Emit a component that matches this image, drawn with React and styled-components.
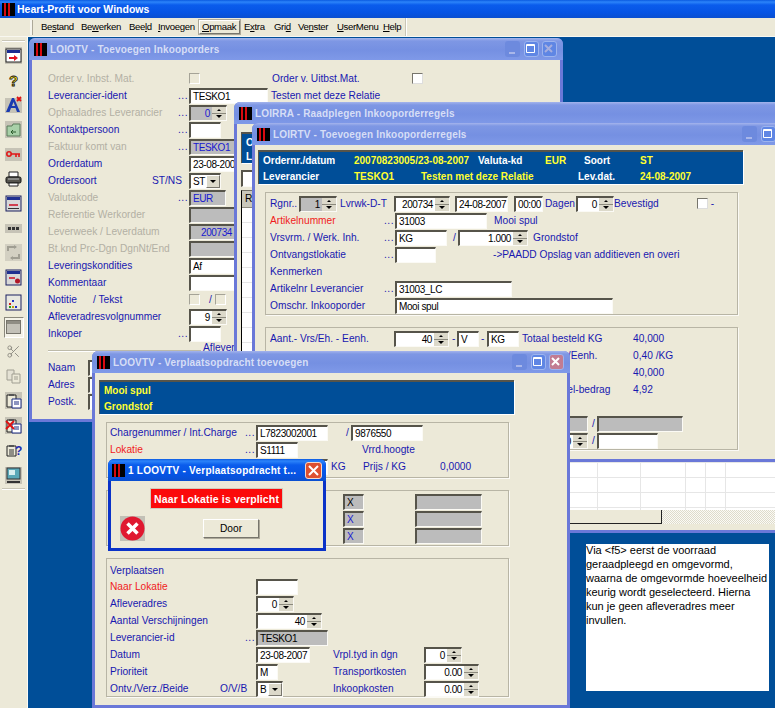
import React from 'react'
import styled, { createGlobalStyle, css } from 'styled-components'
import { Scissors } from 'lucide-react'

const GlobalStyle = createGlobalStyle`
    html, body {
        margin: 0;
        padding: 0;
        background: #004e98;
        overflow: hidden;
    }
    * {
        box-sizing: border-box;
    }
`;

function Win({ x, y, w, h, z, title, close, children }) {
    return (
        <WinFrame $x={x} $y={y} $w={w} $h={h} $z={z}>
            <TitleBar>
                <TitleLogo />
                <TitleText>{title}</TitleText>
                <WinButtons>
                    <WinButton $dim><svg width="15" height="16"><rect x="4" y="11" width="6" height="2" fill="#a9b7ea" /></svg></WinButton>
                    <WinButton><svg width="15" height="16"><path d="M2.5 3.500h8v8h-8z M2.5 4.500h8" fill="none" stroke="#fff" /></svg></WinButton>
                    <WinButton $close={close}><svg width="15" height="16"><path d="M3 4l7 7M10 4l-7 7" stroke={close ? '#fff' : '#a6aede'} strokeWidth="2" /></svg></WinButton>
                </WinButtons>
            </TitleBar>
            <WinBody>{children}</WinBody>
        </WinFrame>
    )
}

function Lead({ w = 141, tone, dots, children }) {
    return (
        <Label $w={w} $tone={tone}>
            <span>{children}</span>
            {dots && <Dots>...</Dots>}
        </Label>
    )
}

function Spin({ w, ml, gray, blue, children }) {
    return (
        <Field $w={w} $ml={ml} $gray={gray} $blue={blue} $spin>
            <SpinValue>{children}</SpinValue>
            <SpinBox>
                <SpinPart><ArrowUp /></SpinPart>
                <SpinPart><ArrowDown /></SpinPart>
            </SpinBox>
        </Field>
    )
}

function Select({ w, children }) {
    return (
        <Field $w={w} $spin>
            <SpinValue $left>{children}</SpinValue>
            <DropButton><ArrowDown /></DropButton>
        </Field>
    )
}

function Toolbar() {
    return (
        <Sidebar>
            <SideRule />
            <Tool><svg width="17" height="17"><rect width="17" height="17" fill="#c6c3b6" /><rect x="1" y="2" width="15" height="13" fill="#fff" stroke="#222" /><rect x="2" y="3" width="13" height="3" fill="#1a2a90" /><path d="M4 10h5V8l4 3-4 3v-2H4z" fill="#e01020" /></svg></Tool>
            <Tool><svg width="17" height="17"><text x="4" y="14" fontFamily="Liberation Sans" fontSize="15" fontWeight="700" fill="#ffe020" stroke="#111" strokeWidth=".8">?</text></svg></Tool>
            <Tool><svg width="17" height="17"><rect y="2" width="17" height="15" fill="#c6c3b6" /><path d="M1 16L7 2h2l6 14h-3l-1.500-4H6l-1.500 4zM7 10h3L8.500 6z" fill="#1a3ab0" /><path d="M12 1l4 4M16 1l-4 4" stroke="#e01010" strokeWidth="1.800" /></svg></Tool>
            <Tool><svg width="17" height="17"><rect width="17" height="17" fill="#c6c3b6" /><path d="M2 5h5l1-2h7v12H2z" fill="#a8d0a8" stroke="#5a7a5a" /><path d="M6 11h5M8 9l-2 2 2 2" stroke="#2a5a2a" fill="none" /></svg></Tool>
            <Tool><svg width="17" height="17"><rect y="2" width="17" height="13" fill="#c6c3b6" /><circle cx="4" cy="8" r="2.200" fill="none" stroke="#e01818" strokeWidth="1.600" /><path d="M6 8h9M11 8v3M14 8v3" stroke="#e01818" strokeWidth="1.600" /></svg></Tool>
            <Tool><svg width="17" height="17"><path d="M4 2h9v5H4z" fill="#fff" stroke="#222" /><rect x="1" y="7" width="15" height="6" rx="1.500" fill="#55544e" stroke="#111" /><path d="M3 9h11" stroke="#bbb" /><path d="M4 13h9v3H4z" fill="#fff" stroke="#222" /></svg></Tool>
            <Tool><svg width="17" height="17"><rect x="1" y="1" width="15" height="15" fill="#d8d8d8" stroke="#1a2060" /><rect x="2" y="2" width="13" height="3" fill="#203090" /><rect x="4" y="9" width="9" height="2" fill="#d04050" /><rect x="3" y="13" width="11" height="1" fill="#333" /></svg></Tool>
            <Tool><svg width="17" height="17"><rect y="4" width="17" height="9" fill="#c6c3b6" /><path d="M3 7h3v3H3zM7 7h3v3H7zM11 7h3v3h-3z" fill="#333" /></svg></Tool>
            <Tool><svg width="17" height="17"><rect width="17" height="17" fill="#d3d0c2" /><path d="M3 7V3h8M14 10v4H6" fill="none" stroke="#a09e92" strokeWidth="2" /><path d="M9 1l3 2-3 2zM8 12l-3 2 3 2z" fill="#a09e92" /></svg></Tool>
            <Tool><svg width="17" height="17"><rect x="1" y="1" width="15" height="15" fill="#d8d8d8" stroke="#1a2060" /><rect x="2" y="2" width="13" height="3" fill="#203090" /><path d="M4 9h6" stroke="#d04050" strokeWidth="2" /><circle cx="12.500" cy="12" r="2.500" fill="#b01828" /></svg></Tool>
            <Tool><svg width="17" height="17"><rect x="1" y="1" width="15" height="15" fill="#e8e8e0" stroke="#1a2060" /><rect x="4" y="9" width="2" height="2" fill="#d02020" /><rect x="4" y="12" width="2" height="2" fill="#20a020" /><rect x="7" y="6" width="2" height="2" fill="#2030c0" /><rect x="7" y="12" width="2" height="2" fill="#c0a010" /><rect x="10" y="12" width="2" height="2" fill="#2030c0" /></svg></Tool>
            <Tool $pressed><svg width="15" height="14"><rect x=".5" y=".5" width="14" height="13" fill="#c3c1b8" stroke="#77756c" /><rect x="1" y="1" width="13" height="3" fill="#8f8d84" /></svg></Tool>
            <Tool><Scissors size={15} color="#8e8c82" strokeWidth={1.500} /></Tool>
            <Tool><svg width="17" height="17"><path d="M2 2h7v10H2z" fill="#e4e1d4" stroke="#a09e92" /><path d="M7 6h8v9H7z" fill="#ece9d8" stroke="#a09e92" /><path d="M9 9h4M9 11h4" stroke="#a09e92" /></svg></Tool>
            <Tool><svg width="17" height="17"><rect width="17" height="17" fill="#c6c3b6" /><path d="M2 3h9v12H2z" fill="#ece9d8" stroke="#222" /><path d="M4 2h5v2H4z" fill="#555" /><path d="M7 7h9v9H7z" fill="#fff" stroke="#1a2a80" /><path d="M9 10h5M9 12h5" stroke="#1a2a80" /></svg></Tool>
            <Tool><svg width="17" height="17"><rect width="17" height="17" fill="#c6c3b6" /><path d="M2 3h9v12H2z" fill="#ece9d8" stroke="#222" /><path d="M4 2h5v2H4z" fill="#555" /><path d="M7 7h9v9H7z" fill="#fff" stroke="#1a2a80" /><path d="M9 10h5M9 12h5" stroke="#1a2a80" /><path d="M1 4l8 8M9 4l-8 8" stroke="#e01010" strokeWidth="1.800" /></svg></Tool>
            <Tool><svg width="17" height="17"><path d="M2 4h9v10H2z" fill="#ece9d8" stroke="#222" /><path d="M4 3h5v2H4z" fill="#555" /><path d="M4 8h5M4 10h5M4 12h5" stroke="#333" /><text x="10" y="13" fontFamily="Liberation Sans" fontSize="12" fontWeight="700" fill="#1a2ab0">?</text></svg></Tool>
            <Tool><svg width="17" height="17"><rect width="17" height="17" fill="#c6c3b6" /><rect x="2" y="1" width="13" height="11" fill="#5aa8b8" stroke="#333" /><rect x="4" y="3" width="6" height="5" fill="#d8eef0" /><path d="M2 15h13" stroke="#333" strokeWidth="2" /></svg></Tool>
            <SideRule $bottom />
        </Sidebar>
    )
}

const menu = [
    [40, <>Be<u>s</u>tand</>], [48, <>Be<u>w</u>erken</>], [29, <>Bee<u>l</u>d</>], [43, <><u>I</u>nvoegen</>],
    [43, <><u>O</u>pmaak</>, true], [30, <>E<u>x</u>tra</>], [24, <>Gri<u>d</u></>], [39, <>Ve<u>n</u>ster</>],
    [46, <><u>U</u>serMenu</>], [27, <><u>H</u>elp</>],
]

const gridRows = Array.from({ length: 21 })
const gridCols = [356, 43, 45, 20, 20, 60]

export default function App() {
    return (
        <Page>
            <GlobalStyle />
            <AppTitle>
                <TitleLogo />
                <AppName>Heart-Profit voor Windows</AppName>
            </AppTitle>
            <MenuBar>
                <Grip />
                {menu.map(([w, text, open], i) => <MenuItem key={i} $w={w}><MenuLabel $open={open}>{text}</MenuLabel></MenuItem>)}
                <MenuEnd />
            </MenuBar>
            <Workspace>
                <Toolbar />
                <Desktop>
                    {/* main order window */}
                    <Win x={29} y={38} w={534} h={384} z={1} title="LOIOTV - Toevoegen Inkooporders">
                        <Form>
                            <Row $h={18}><Lead tone="off">Order v. Inbst. Mat.</Lead><Check $off /><Gap $w={72} /><Lead w={140}>Order v. Uitbst.Mat.</Lead><Check /></Row>
                            <Row><Lead dots>Leverancier-ident</Lead><Field $w={79}>TESKO1</Field><Label $ml={3}>Testen met deze Relatie</Label></Row>
                            <Row><Lead tone="off" dots>Ophaaladres Leverancier</Lead><Spin w={38} gray blue>0</Spin></Row>
                            <Row><Lead dots>Kontaktpersoon</Lead><Field $w={32} /></Row>
                            <Row><Lead tone="off" dots>Faktuur komt van</Lead><Field $w={72} $gray $blue>TESKO1</Field></Row>
                            <Row><Lead>Orderdatum</Lead><Field $w={64}>23-08-2007</Field></Row>
                            <Row><Lead w={104}>Ordersoort</Lead><Lead w={37}>ST/NS</Lead><Select w={32}>ST</Select></Row>
                            <Row><Lead tone="off" dots>Valutakode</Lead><Field $w={37} $gray $blue>EUR</Field></Row>
                            <Row><Lead tone="off">Referentie Werkorder</Lead><Field $w={80} $gray /></Row>
                            <Row><Lead tone="off">Leverweek / Leverdatum</Lead><Spin w={60} gray blue>200734</Spin></Row>
                            <Row><Lead tone="off">Bt.knd Prc-Dgn DgnNt/End</Lead><Field $w={80} $gray /></Row>
                            <Row><Lead>Leveringskondities</Lead><Field $w={80}>Af</Field></Row>
                            <Row><Lead>Kommentaar</Lead><Field $w={80} /></Row>
                            <Row><Lead w={45}>Notitie</Lead><Lead w={96}>/ Tekst</Lead><Check $off /><Label $ml={9} $w={6}>/</Label><Check $off /></Row>
                            <Row><Lead>Afleveradresvolgnummer</Lead><Spin w={38}>9</Spin></Row>
                            <Row><Lead dots>Inkoper</Lead><Field $w={32} /></Row>
                            <Row><Rule><RuleText>Afleveradres</RuleText></Rule></Row>
                            <Row><Lead w={40}>Naam</Lead><Field $w={80} /></Row>
                            <Row><Lead w={40}>Adres</Lead><Field $w={80} /></Row>
                            <Row><Lead w={40}>Postk.</Lead><Field $w={80} /></Row>
                        </Form>
                    </Win>

                    {/* order lines overview, only its edges are seen */}
                    <Win x={234} y={102} w={600} h={431} z={2} title="LOIRRA - Raadplegen Inkooporderregels">
                        <BackPane>
                            <InfoBar $h={31} $w={500} $mb={7}>
                                <InfoRow><Info>Ordernr./datum</Info></InfoRow>
                                <InfoRow><Info>Leverancier</Info></InfoRow>
                            </InfoBar>
                            <Field $w={120} $h={17} />
                            <DataGrid>
                                <GridHead>Rgnr</GridHead>
                                <GridBody>
                                    {gridRows.map((_, i) => (
                                        <GridRow key={i}>{gridCols.map((w, j) => <GridCell key={j} $w={w} />)}</GridRow>
                                    ))}
                                </GridBody>
                                <ScrollBar><ScrollThumb /><ScrollTrack /></ScrollBar>
                            </DataGrid>
                        </BackPane>
                    </Win>

                    {/* order line entry */}
                    <Win x={252} y={123} w={548} h={339} z={3} title="LOIRTV - Toevoegen Inkooporderregels">
                        <Pane $left={3} $top={5}>
                            <InfoBar $h={34} $w={485}>
                                <InfoRow>
                                    <Info $w={91}>Ordernr./datum</Info><Info $w={124} $value>20070823005/23-08-2007</Info>
                                    <Info $w={67}>Valuta-kd</Info><Info $w={39} $value>EUR</Info>
                                    <Info $w={56}>Soort</Info><Info $value>ST</Info>
                                </InfoRow>
                                <InfoRow>
                                    <Info $w={91}>Leverancier</Info><Info $w={67} $value>TESKO1</Info>
                                    <Info $w={157} $value>Testen met deze Relatie</Info><Info $w={62}>Lev.dat.</Info><Info $value>24-08-2007</Info>
                                </InfoRow>
                            </InfoBar>
                        </Pane>
                        <Group $ml={10} $mt={8} $w={473} $h={123} $top={2} $left={4}>
                            <Row><Lead w={29}>Rgnr..</Lead><Spin w={38} gray>1</Spin><Gap $w={3} /><Lead w={54}>Lvrwk-D-T</Lead><Spin w={56}>200734</Spin><Field $w={53} $ml={5}>24-08-2007</Field><Field $w={29} $ml={6}>00:00</Field><Gap $w={2} /><Lead w={31}>Dagen</Lead><Spin w={38}>0</Spin><Lead w={83}>Bevestigd</Lead><Check /><Label $ml={0}>&nbsp;-</Label></Row>
                            <Row><Lead w={125} tone="req" dots>Artikelnummer</Lead><Field $w={92}>31003</Field><Label $ml={7}>Mooi spul</Label></Row>
                            <Row><Lead w={125} dots>Vrsvrm. / Werk. Inh.</Lead><Field $w={52}>KG</Field><Label $ml={6} $w={5}>/</Label><Spin w={70}>1.000</Spin><Label $ml={5}>Grondstof</Label></Row>
                            <Row><Lead w={125} dots>Ontvangstlokatie</Lead><Field $w={41} /><Label $ml={57}>-&gt;PAADD Opslag van additieven en overi</Label></Row>
                            <Row><Lead w={125}>Kenmerken</Lead></Row>
                            <Row><Lead w={125} dots>Artikelnr Leverancier</Lead><Field $w={117}>31003_LC</Field></Row>
                            <Row><Lead w={125}>Omschr. Inkooporder</Lead><Field $w={218}>Mooi spul</Field></Row>
                        </Group>
                        <Group $ml={10} $mt={12} $w={473} $h={123} $top={2} $left={4}>
                            <Row><Lead w={124}>Aant.- Vrs/Eh. - Eenh.</Lead><Spin w={55}>40</Spin><Label $ml={3} $w={5}>-</Label><Field $w={22}>V</Field><Label $ml={2} $w={6}>-</Label><Field $w={32}>KG</Field><Label $ml={3} $w={111}>Totaal besteld KG</Label><Label>40,000</Label></Row>
                            <Row><Gap $w={252} /><Label $w={111}>Nettoprijs /Eenh.</Label><Label>0,40 /KG</Label></Row>
                            <Row><Gap $w={252} /><Label $w={111}>Totaal KG</Label><Label>40,000</Label></Row>
                            <Row><Gap $w={252} /><Label $w={111}>Inkoopregel-bedrag</Label><Label>4,92</Label></Row>
                            <Row />
                            <Row><Gap $w={260} /><Field $w={58} $gray /><Label $ml={4} $w={5}>/</Label><Field $w={86} $gray /></Row>
                            <Row><Gap $w={260} /><Spin w={58}>0</Spin><Label $ml={4} $w={5}>/</Label><Field $w={61} /></Row>
                        </Group>
                    </Win>

                    {/* stock transfer */}
                    <Win x={92} y={351} w={478} h={357} z={4} close title="LOOVTV - Verplaatsopdracht toevoegen">
                        <Pane $left={4} $top={7}>
                            <InfoBar $h={34} $w={415}>
                                <InfoRow><Info $value>Mooi spul</Info></InfoRow>
                                <InfoRow><Info $value>Grondstof</Info></InfoRow>
                            </InfoBar>
                        </Pane>
                        <Group $ml={11} $mt={8} $w={403} $h={56} $top={1} $left={3}>
                            <Row><Lead w={146} dots>Chargenummer / Int.Charge</Lead><Field $w={72}>L7823002001</Field><Label $ml={18} $w={5}>/</Label><Field $w={72}>9876550</Field></Row>
                            <Row><Lead w={146} tone="req" dots>Lokatie</Lead><Field $w={42}>S1111</Field><Label $ml={64}>Vrrd.hoogte</Label></Row>
                            <Row><Gap $w={146} /><Field $w={72} /><Label $ml={3} $w={32}>KG</Label><Label $w={77}>Prijs / KG</Label><Label>0,0000</Label></Row>
                        </Group>
                        <Group $ml={11} $mt={12} $w={403} $h={56} $top={2} $left={3}>
                            <Row><Gap $w={233} /><Field $w={21} $gray>X</Field><Field $w={67} $ml={51} $gray /></Row>
                            <Row><Gap $w={233} /><Field $w={21} $gray $blue>X</Field><Field $w={67} $ml={51} $gray /></Row>
                            <Row><Gap $w={233} /><Field $w={21} $gray $blue>X</Field><Field $w={67} $ml={51} $gray /></Row>
                        </Group>
                        <Group $ml={11} $mt={12} $w={403} $h={139} $top={3} $left={3}>
                            <Row $h={16}><Lead w={146}>Verplaatsen</Lead></Row>
                            <Row><Lead w={146} tone="req">Naar Lokatie</Lead><Field $w={42} /></Row>
                            <Row><Lead w={146}>Afleveradres</Lead><Spin w={38}>0</Spin></Row>
                            <Row><Lead w={146}>Aantal Verschijningen</Lead><Spin w={66}>40</Spin></Row>
                            <Row><Lead w={146} dots>Leverancier-id</Lead><Field $w={72} $gray>TESKO1</Field></Row>
                            <Row><Lead w={146}>Datum</Lead><Field $w={54}>23-08-2007</Field><Label $ml={23} $w={91}>Vrpl.tyd in dgn</Label><Spin w={38}>0</Spin></Row>
                            <Row><Lead w={146}>Prioriteit</Lead><Field $w={22}>M</Field><Label $ml={55} $w={91}>Transportkosten</Label><Spin w={55}>0.00</Spin></Row>
                            <Row><Lead w={110}>Ontv./Verz./Beide</Lead><Lead w={36}>O/V/B</Lead><Select w={27}>B</Select><Label $ml={50} $w={91}>Inkoopkosten</Label><Spin w={55}>0.00</Spin></Row>
                        </Group>
                    </Win>

                    {/* error message */}
                    <Dialog>
                        <DialogTitle>
                            <TitleLogo />
                            <DialogName>1 LOOVTV - Verplaatsopdracht t...</DialogName>
                            <DialogClose><svg width="17" height="17"><path d="M4 4l9 9M13 4l-9 9" stroke="#fff" strokeWidth="2" /></svg></DialogClose>
                        </DialogTitle>
                        <DialogBody>
                            <ErrorText>Naar Lokatie is verplicht</ErrorText>
                            <DialogActions>
                                <svg width="25" height="25">
                                    <rect width="25" height="25" fill="#c2c0b6" />
                                    <circle cx="12.500" cy="12.500" r="12" fill="#e01830" />
                                    <path d="M7.500 7.500l10 10M17.500 7.500l-10 10" stroke="#fff" strokeWidth="3.500" />
                                </svg>
                                <DoorButton>Door</DoorButton>
                            </DialogActions>
                        </DialogBody>
                    </Dialog>

                    <Note>
                        <NoteText>
                            Via &lt;f5&gt; eerst de voorraad<br />
                            geraadpleegd en omgevormd,<br />
                            waarna de omgevormde hoeveelheid<br />
                            keurig wordt geselecteerd. Hierna<br />
                            kun je geen afleveradres meer<br />
                            invullen.
                        </NoteText>
                    </Note>
                </Desktop>
            </Workspace>
        </Page>
    )
}

const sansFont = `"Liberation Sans", Arial, sans-serif`;

const Page = styled.div`
    position: relative;
    width: 775px;
    height: 708px;
    overflow: hidden;
    display: flex;
    flex-direction: column;
    font-family: ${sansFont};
    font-size: 10.200px;
    color: #000;
    background: #004e98;
`;

const AppTitle = styled.div`
    flex: none;
    height: 18px;
    padding-left: 2px;
    display: flex;
    align-items: center;
    gap: 2px;
    background: linear-gradient(180deg, #0a5ae0 0, #2c84fa 2px, #0a5cec 5px, #0654e4 70%, #0a4fd0 100%);
`;

const AppName = styled.div`
    color: #fff;
    font-weight: 700;
    font-size: 10.500px;
`;

const TitleLogo = styled.div`
    flex: none;
    width: 13px;
    height: 13px;
    background: linear-gradient(90deg, #000 0 2px, #d80a10 2px 4px, #000 4px 6px, #d80a10 6px 8px, #000 8px);
`;

const MenuBar = styled.div`
    flex: none;
    height: 19px;
    padding-left: 30px;
    display: flex;
    align-items: center;
    background: #ece9d8;
    border-bottom: 1px solid #f8f7f0;
`;

const Grip = styled.div`
    width: 3px;
    height: 15px;
    margin-right: 3px;
    background: #f6f5ee;
    border-right: 1px solid #aca899;
`;

const MenuItem = styled.div`
    flex: none;
    width: ${p => p.$w}px;
    padding-left: 5px;
    font-size: 9.600px;
    letter-spacing: -.350px;
`;

const MenuLabel = styled.div`
    position: relative;
    white-space: nowrap;
    line-height: 12px;
    ${p => p.$open && css`
        width: 41px;
        margin-left: -2px;
        padding-left: 2px;
        border: 1px solid;
        border-color: #fff #77756c #77756c #fff;
        outline: 1px solid #aca899;
    `}
`;

const MenuEnd = styled.div`
    width: 2px;
    height: 18px;
    background: #c9c6b6;
    border-right: 1px solid #fff;
`;

const Workspace = styled.div`
    flex: 1;
    display: flex;
    min-height: 0;
`;

const Sidebar = styled.div`
    flex: none;
    width: 28px;
    display: flex;
    flex-direction: column;
    align-items: center;
    background: #ece9d8;
    border-right: 1px solid #fbfaf5;
`;

const SideRule = styled.div`
    flex: none;
    width: 23px;
    height: 2px;
    margin-top: ${p => p.$bottom ? 1 : 3}px;
    margin-bottom: ${p => p.$bottom ? 0 : 1}px;
    background: #c9c6b6;
    border-bottom: 1px solid #fff;
`;

const Tool = styled.div`
    flex: none;
    width: 20px;
    height: 24.700px;
    display: flex;
    align-items: center;
    justify-content: center;
    ${p => p.$pressed && css`
        height: 21px;
        margin: 2px 0 1.700px;
        border: 1px solid;
        border-color: #8a887c #fff #fff #8a887c;
        background: #f4f2e8;
    `}
`;

const Desktop = styled.div`
    position: relative;
    flex: 1;
    background: #004e98;
`;

const WinFrame = styled.div`
    position: absolute;
    left: ${p => p.$x - 28}px;
    top: ${p => p.$y - 37}px;
    width: ${p => p.$w}px;
    height: ${p => p.$h}px;
    z-index: ${p => p.$z};
    display: flex;
    flex-direction: column;
    padding: 0 3px 3px;
    background: #6a78d8;
    border-radius: 6px 6px 0 0;
    overflow: hidden;
`;

const TitleBar = styled.div`
    flex: none;
    height: 22px;
    margin: 0 -3px;
    padding: 0 6px 0 5px;
    display: flex;
    align-items: center;
    gap: 3px;
    background: linear-gradient(180deg, #a4b4ec 0, #7e97e4 3px, #7590e2 55%, #7f99e8 100%);
`;

const TitleText = styled.div`
    flex: 1;
    color: #d6def6;
    font-weight: 700;
    font-size: 10px;
    letter-spacing: .150px;
    white-space: nowrap;
`;

const WinButtons = styled.div`
    flex: none;
    display: flex;
    gap: 3.500px;
`;

const WinButton = styled.div`
    width: 15px;
    height: 16px;
    border-radius: 3px;
    background: ${p => p.$dim ? '#6d8ade' : p.$close ? '#c27c92' : '#5f86e4'};
    border: ${p => p.$dim ? 'none' : '1px solid #9db4ee'};
    display: flex;
    align-items: center;
    justify-content: center;
    svg { flex: none; }
`;

const WinBody = styled.div`
    position: relative;
    flex: 1;
    min-height: 0;
    background: #ece9d8;
    overflow: hidden;
`;

const Form = styled.div`
    padding: 9px 0 0 16px;
`;

const Row = styled.div`
    display: flex;
    align-items: center;
    height: ${p => p.$h || 17}px;
    white-space: nowrap;
`;

const Gap = styled.span`
    display: inline-block;
    flex: none;
    width: ${p => p.$w}px;
`;

const Label = styled.div`
    flex: none;
    display: flex;
    justify-content: space-between;
    width: ${p => p.$w ? p.$w + 'px' : 'auto'};
    margin-left: ${p => p.$ml || 0}px;
    color: ${p => p.$tone === 'req' ? '#f01c1c' : p.$tone === 'off' ? '#b3b0a4' : '#1818b0'};
    white-space: nowrap;
`;

const Dots = styled.span`
    padding-right: 1px;
    color: #1818b0;
    letter-spacing: .500px;
`;

const Field = styled.div`
    flex: none;
    display: flex;
    align-items: center;
    width: ${p => p.$w}px;
    height: ${p => p.$h || 16}px;
    margin-left: ${p => p.$ml || 0}px;
    padding-left: ${p => p.$spin ? 0 : 2}px;
    overflow: hidden;
    border-style: solid;
    border-width: 2px 1px 1px 2px;
    border-color: #56544a #fbfaf5 #fbfaf5 #56544a;
    background: ${p => p.$gray ? '#bcbcbc' : '#fff'};
    color: ${p => p.$blue ? '#1818d0' : '#000'};
    font-size: 10px;
    letter-spacing: -.400px;
    line-height: 13px;
`;

const SpinValue = styled.div`
    flex: 1;
    padding: ${p => p.$left ? '0 0 0 2px' : '0 2px 0 0'};
    text-align: ${p => p.$left ? 'left' : 'right'};
`;

const SpinBox = styled.div`
    flex: none;
    width: 14px;
    height: 100%;
    display: flex;
    flex-direction: column;
    gap: 1px;
    background: #8c8a7e;
`;

const SpinPart = styled.div`
    flex: 1;
    display: flex;
    align-items: center;
    justify-content: center;
    background: #dcd9ca;
`;

const ArrowUp = styled.i`
    width: 0;
    height: 0;
    border-left: 2px solid transparent;
    border-right: 2px solid transparent;
    border-bottom: 2px solid #000;
`;

const ArrowDown = styled(ArrowUp)`
    border-bottom: none;
    border-top: 3px solid #000;
    border-left-width: 3px;
    border-right-width: 3px;
`;

const DropButton = styled.div`
    flex: none;
    width: 14px;
    height: 100%;
    display: flex;
    align-items: center;
    justify-content: center;
    background: #dcd9ca;
    border: 1px solid;
    border-color: #fff #77756c #77756c #fff;
`;

const Check = styled.div`
    flex: none;
    width: 11px;
    height: 11px;
    background: ${p => p.$off ? '#ece9d8' : '#fff'};
    border: 1px solid;
    border-color: ${p => p.$off ? '#a5a397 #fff #fff #a5a397' : '#77756c #ddd #ddd #77756c'};
`;

const Rule = styled.div`
    position: relative;
    width: 475px;
    height: 2px;
    background: #bdbaa9;
    border-bottom: 1px solid #fff;
`;

const RuleText = styled.span`
    position: absolute;
    left: 153px;
    top: -8px;
    padding: 0 2px;
    color: #1818b0;
    background: #ece9d8;
`;

const Pane = styled.div`
    padding: ${p => p.$top}px 0 0 ${p => p.$left}px;
`;

const BackPane = styled.div`
    height: 100%;
    padding: 8px 0 0 4px;
    display: flex;
    flex-direction: column;
`;

const InfoBar = styled.div`
    flex: none;
    width: ${p => p.$w}px;
    height: ${p => p.$h}px;
    margin-bottom: ${p => p.$mb || 0}px;
    padding: 1px 0 0 4px;
    background: #004e98;
    border-top: 2px solid #56544a;
    border-left: 1px solid #56544a;
    box-shadow: 1px 1px 0 #fff;
    display: flex;
    flex-direction: column;
    justify-content: space-around;
`;

const InfoRow = styled.div`
    display: flex;
    white-space: nowrap;
`;

const Info = styled.div`
    flex: none;
    width: ${p => p.$w ? p.$w + 'px' : 'auto'};
    color: ${p => p.$value ? '#ffff30' : '#fff'};
    font-weight: 700;
    font-size: 10px;
`;

const Group = styled.div`
    width: ${p => p.$w}px;
    height: ${p => p.$h}px;
    margin: ${p => p.$mt}px 0 0 ${p => p.$ml}px;
    padding: ${p => p.$top}px 0 0 ${p => p.$left}px;
    border: 1px solid #b8b5a5;
    box-shadow: 1px 1px 0 #fbfaf5;
`;

const DataGrid = styled.div`
    flex: none;
    width: 600px;
    height: 334px;
    margin-top: 3px;
    display: flex;
    flex-direction: column;
    border-left: 1px solid #000;
    border-top: 1px solid #716f64;
    overflow: hidden;
    background: #fff;
`;

const GridHead = styled.div`
    flex: none;
    height: 17px;
    padding-left: 3px;
    line-height: 16px;
    background: #c9c7bb;
    border-bottom: 1px solid #8c8a7e;
`;

const GridBody = styled.div`
    flex: 1;
    min-height: 0;
    overflow: hidden;
`;

const GridRow = styled.div`
    display: flex;
    height: 15px;
    border-bottom: 1px solid #e6e6e6;
`;

const GridCell = styled.div`
    flex: none;
    width: ${p => p.$w}px;
    border-right: 1px solid #e6e6e6;
`;

const ScrollBar = styled.div`
    flex: none;
    height: 14px;
    display: flex;
`;

const ScrollThumb = styled.div`
    flex: none;
    width: 420px;
    background: #ece9d8;
    border-right: 1px solid #222;
    border-bottom: 1px solid #222;
`;

const ScrollTrack = styled.div`
    flex: 1;
    background: repeating-conic-gradient(#fbfaf5 0 25%, #dedbcb 0 50%) 0 0 / 2px 2px;
`;

const Dialog = styled.div`
    position: absolute;
    left: 80px;
    top: 422px;
    z-index: 5;
    width: 218px;
    height: 92px;
    display: flex;
    flex-direction: column;
    padding: 0 3px 3px;
    background: #0a32c8;
    border-radius: 6px 6px 0 0;
    overflow: hidden;
`;

const DialogTitle = styled.div`
    flex: none;
    height: 22px;
    margin: 0 -3px;
    padding: 0 4px;
    display: flex;
    align-items: center;
    gap: 3px;
    background: linear-gradient(180deg, #0a58e0 0, #2c84fa 2px, #0a5cec 6px, #0654e4 70%, #0a4fd0 100%);
`;

const DialogName = styled.div`
    flex: 1;
    min-width: 0;
    color: #fff;
    font-size: 10px;
    font-weight: 700;
    letter-spacing: .250px;
    white-space: nowrap;
`;

const DialogClose = styled.div`
    flex: none;
    width: 17px;
    height: 17px;
    border-radius: 3px;
    background: #de5030;
    border: 1px solid #f6d8c8;
    display: flex;
    align-items: center;
    justify-content: center;
    svg { flex: none; }
`;

const DialogBody = styled.div`
    flex: 1;
    padding-top: 7px;
    display: flex;
    flex-direction: column;
    background: #ece9d8;
`;

const ErrorText = styled.div`
    flex: none;
    width: 133px;
    height: 21px;
    margin-left: 39px;
    display: flex;
    align-items: center;
    justify-content: center;
    color: #fff;
    font-size: 10.500px;
    font-weight: 700;
    letter-spacing: .150px;
    white-space: nowrap;
    background: #fb0a0a;
    border: 1px solid #cfccbc;
`;

const DialogActions = styled.div`
    display: flex;
    align-items: flex-start;
    margin-top: 7px;
    padding-left: 9px;
`;

const DoorButton = styled.div`
    flex: none;
    width: 56px;
    height: 19px;
    margin: 3px 0 0 58px;
    display: flex;
    align-items: center;
    justify-content: center;
    background: #ece9d8;
    border: 1px solid;
    border-color: #fff #77756c #77756c #fff;
    box-shadow: 1px 1px 0 #aca899;
`;

const Note = styled.div`
    position: absolute;
    left: 558px;
    top: 507px;
    z-index: 2;
    width: 183px;
    height: 147px;
    overflow: hidden;
    background: #fff;
`;

const NoteText = styled.div`
    margin-top: -1px;
    color: #000;
    font-size: 11px;
    line-height: 14px;
    white-space: nowrap;
`;
